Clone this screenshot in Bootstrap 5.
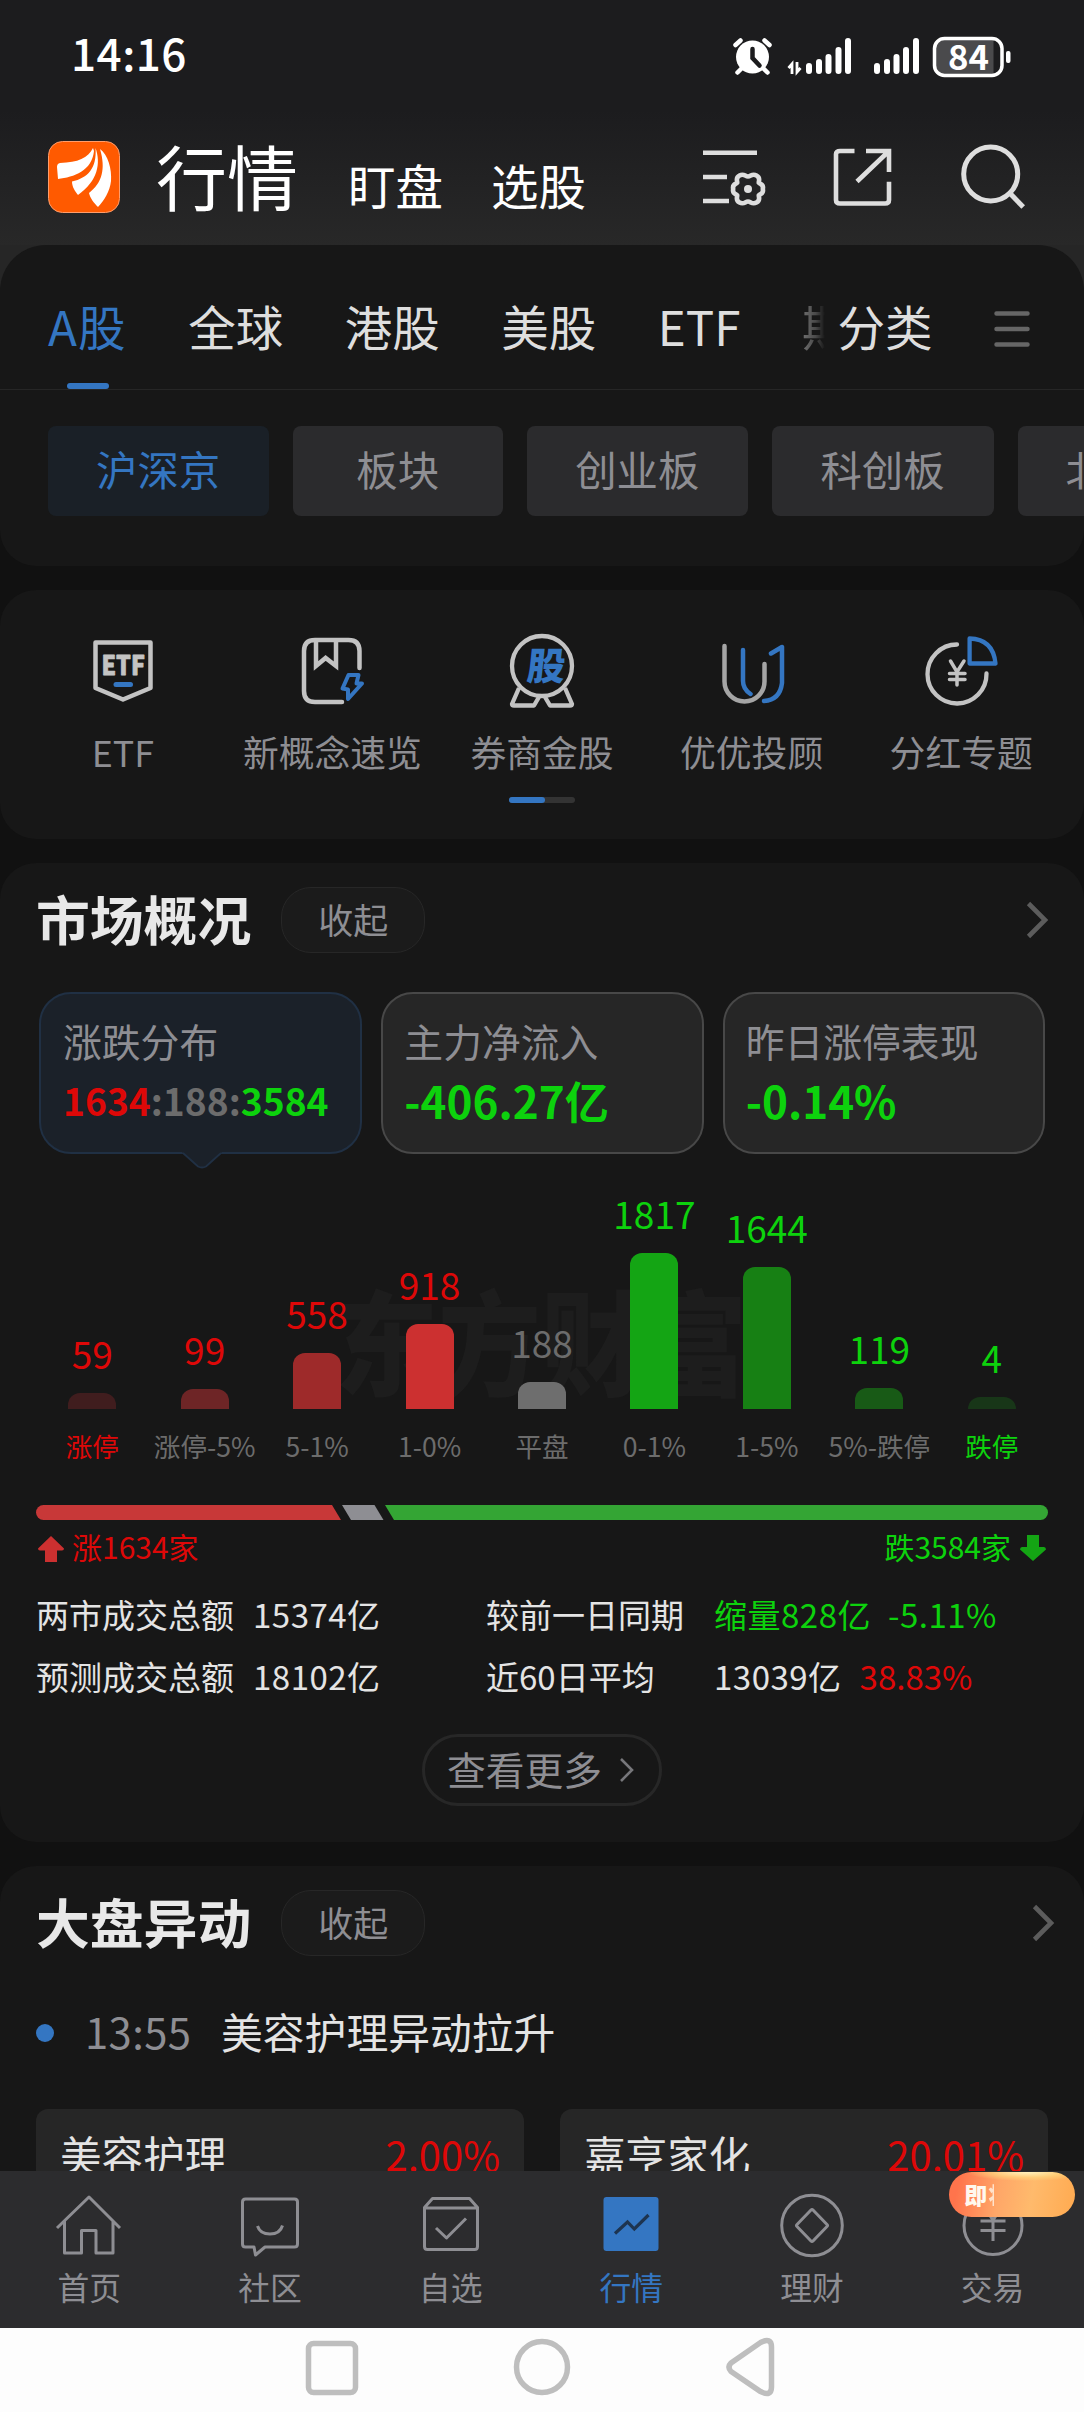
<!DOCTYPE html>
<html lang="zh-CN" data-bs-theme="dark">
<head>
<meta charset="utf-8">
<meta name="viewport" content="width=device-width, initial-scale=1">
<title>行情</title>
<link href="https://cdn.jsdelivr.net/npm/bootstrap@5.3.0/dist/css/bootstrap.min.css" rel="stylesheet">
<style>
  :root { --up:#de0808; --down:#0dd20d; --brand:#3476c2; --muted:#8e8e93; --ink:#e4e4e4; }
  body { width:1084px; height:2412px; margin:0; overflow:hidden; background:#111; color:var(--ink);
    font-family:"Noto Sans CJK SC","Noto Sans",sans-serif; line-height:1; white-space:nowrap; }
  svg { display:block; fill:none; flex:none; overflow:visible; }
  .screen { height:2171px; overflow:hidden; }
  .topbar { height:245px; background:linear-gradient(#1c1c1e 0,#1c1c1e 110px,#282828 245px); color:#fff; }
  .topwrap { background:linear-gradient(#262626 0,#262626 300px,#111 301px); }
  .statusline { height:112px; padding:0 73px 0 71px; }
  .clock { font-size:44px; font-weight:500; padding-top:30px; letter-spacing:.5px; }
  .titles { padding:26px 59px 0 48px; }
  .t-main { font-size:71px; margin-left:36px; }
  .t-sub { font-size:47.5px; }
  .panel { background:#171717; border-radius:36px; }
  .panel-first { border-radius:46px 46px 36px 36px; height:321px; }
  .tabs { height:145px; padding:57px 54px 0 48px; border-bottom:1px solid #262626; font-size:47.5px; gap:61.5px; color:#dedede; }
  .tabs .on { color:var(--brand); letter-spacing:1.2px; }
  .tabs .on::after { content:""; position:absolute; left:19px; top:81px; width:42px; height:6px; border-radius:3px; background:var(--brand); }
  .fade-tab { width:26px; overflow:hidden; -webkit-mask-image:linear-gradient(90deg,rgba(0,0,0,.45),rgba(0,0,0,.25) 60%,transparent); mask-image:linear-gradient(90deg,rgba(0,0,0,.45),rgba(0,0,0,.25) 60%,transparent); }
  .chips { padding:36px 0 0 48px; gap:24px; overflow:hidden; }
  .chip { height:90px; min-width:210px; padding:0 49px 5px 48px; border-radius:8px; background:#2b2b2d; color:var(--muted); font-size:41.4px; flex:none; }
  .chip.on { background:#1a2027; color:var(--brand); }
  .quick { margin-top:24px; height:249px; padding:40px 18px 0; }
  .quick-item { width:20%; font-size:35.8px; color:var(--muted); }
  .quick-item span { margin-top:24px; }
  .pager { width:66px; height:6px; border-radius:3px; background:#333; margin-top:27px; }
  .pager i { display:block; width:36px; height:6px; border-radius:3px; background:var(--brand); }
  .market { margin-top:24px; height:979px; padding:0 36px; }
  .head { height:114px; }
  .head h2 { font-size:53.8px; font-weight:700; line-height:1; margin:0 30px 5px 0; letter-spacing:0; color:#e8e8e8; }
  .fold { width:144px; height:66px; border:1px solid #272727; border-radius:30px; background:#1b1b1b; color:var(--muted); font-size:35px; padding-bottom:3px; }
  .stats { margin:15px 3px 0; gap:19px; }
  .stat { flex:1; height:162px; border:2px solid #484848; border-radius:32px; background:#262626; padding:27px 0 0 21px; }
  .stat.on { background:#1b2129; border-color:#203044; padding-left:22px; }
  .stat .lbl { font-size:38.8px; color:var(--muted); }
  .stat .val { font-size:44px; font-weight:700; margin-top:18px; }
  .stat.on .val { font-size:37.2px; margin-top:22px; color:#6c6c6c; }
  .tip { position:absolute; left:141px; top:158px; }
  .chart { height:255px; margin-top:0; }
  .wmark { position:absolute; left:299px; bottom:14px; font-size:103px; font-weight:900; color:#1d1d1d; line-height:1; transform:scaleY(1.1); transform-origin:bottom; }
  .barcol { width:11.111%; font-size:37px; }
  .barcol b { display:block; width:48px; border-radius:12px 12px 0 0; margin-top:21px; }
  .axis { margin-top:24px; font-size:26.6px; color:#6c6c6c; }
  .axis span { width:11.111%; text-align:center; display:flex; justify-content:center; }
  .up { color:var(--up)!important; } .down { color:var(--down)!important; }
  .strip { margin-top:45px; height:15px; border-radius:7.5px; overflow:hidden; }
  .counts { font-size:30px; margin-top:11px; height:30px; padding:0 2px; }
  .totals { font-size:33px; margin-top:37px; }
  .totals > div { height:62px; align-items:flex-start; }
  .wide { letter-spacing:.5px; }
  .c1 { width:217px; } .c2 { width:233px; } .c3 { width:228px; }
  .more { width:240px; height:72px; border:3px solid #272727; border-radius:36px; font-size:38.8px; color:var(--muted); padding-right:4px; margin-top:12px; gap:18px; }
  .more span { margin-bottom:3px; }
  .moves { margin-top:24px; height:400px; padding:0 36px; }
  .event { margin-top:31px; font-size:41.8px; height:42px; }
  .dot { width:18px; height:18px; border-radius:50%; background:var(--brand); margin-right:31px; margin-top:2px; }
  .pair { margin-top:56px; gap:36px; }
  .tile { flex:1; height:150px; background:#262626; border-radius:12px; padding:25px 24px 0 24px; font-size:41.6px; }
  .tile .num { font-size:40px; }
  .tabbar { height:157px; background:#2c2c2e; color:var(--muted); }
  .tabbar > div { width:16.6667%; padding-top:19px; padding-right:2px; font-size:31.8px; }
  .tabbar span.cap { margin-top:11px; }
  .promo { position:absolute; left:46px; top:1px; width:126px; height:45px; border-radius:23px; padding:11px 0 0 15px; overflow:hidden;
    background:radial-gradient(ellipse 60px 9px at 78px 0,#fff3c0,rgba(255,220,130,.6) 60%,transparent),linear-gradient(100deg,#ff744c 8%,#ffa768 40%,#ffba6c 65%,#ffaa50); color:#fff8ee; font-size:23px; font-weight:900; }
  .promo i { font-style:normal; width:6px; overflow:hidden; margin-left:1px; opacity:.75; }
  .sysnav { height:84px; background:#fdfdfd; }
</style>
</head>
<body class="d-flex flex-column">
<main class="screen flex-shrink-0">
  <div class="topwrap">
  <header class="topbar">
    <div class="statusline d-flex justify-content-between align-items-start">
      <span class="clock">14:16</span>
      <svg width="280" height="112" viewBox="731 0 280 112">
        <g stroke="#fff" stroke-linecap="round"><circle cx="752.500" cy="57" r="16.500" fill="#fff" stroke="none"/><path d="M735.500 45l5-4.500M769.500 45l-5-4.500M742 68l-4.500 4.500M763 68l4.500 4.500" stroke-width="4.500"/><path d="M752.500 49v9l7 7.500" stroke="#1c1c1e" stroke-width="4.500"/>
        <path d="M788.500 68l3.500-4v10M797 62v10l3.500-4" stroke-width="2.800" stroke-linecap="butt"/>
        <path d="M809 66v5M819 62v9M828.500 57v14M838.500 50v21M848 41v30M877 66v5M887 62v9M896.500 57v14M906 50v21M916 41v30" stroke-width="6"/></g>
        <path d="M940 40h53.500v34h-53.500q-5 0-5-5v-24q0-5 5-5z" fill="#4a4a4c"/>
        <rect x="934.500" y="38.500" width="67.500" height="37" rx="10" stroke="#fff" stroke-width="3.500"/>
        <rect x="1006" y="51" width="4.500" height="12" rx="2" fill="#fff"/>
        <text x="948" y="70" fill="#fff" font-size="34" font-weight="700" textLength="41" lengthAdjust="spacingAndGlyphs">84</text>
      </svg>
    </div>
    <div class="titles d-flex align-items-start">
      <svg width="72" height="72" viewBox="0 0 72 72" style="margin-top:3px"><rect x=".5" y=".5" width="71" height="71" rx="14" fill="#ff5a00" stroke="#ff9d6b"/><g fill="#fff"><path d="M45 7C40 17 30 21.500 12 22Q9 22.500 9 26L10 38C26 36 44 30 46 10z"/><path d="M47.500 7C53 22 50 40 30 54C27 50 24 46 24 40.500C40 37 49 27 47.500 7z"/><path d="M52 8C60 14 64 28 63 40C62 50 56 60 50 66C46 62 42 57 41 52C54 42 58 28 52 8z"/></g></svg>
      <div class="d-flex align-items-baseline me-auto" style="margin-top:1px">
        <span class="t-main">行情</span><span class="t-sub" style="margin-left:50px">盯盘</span><span class="t-sub" style="margin-left:48px">选股</span>
      </div>
      <svg width="64" height="62" viewBox="702 146 64 62" style="margin:8px 66px 0 0" stroke="#dedede" stroke-width="4.600"><path d="M703 152.700h54M703 177h24M703 201h26"/><path transform="translate(748 189)" stroke-linejoin="round" d="M10.800 -6.250C12 -5 16 -5 14.800 0C16 5 12 5 10.800 6.250C10.500 8 13 11 8.500 13.500C4 16 3 12.500 0 12.500C-3 12.500-4 16-8.500 13.500C-13 11-10.500 8-10.800 6.250C-12 5-16 5-14.800 0C-16-5-12-5-10.800-6.250C-10.500-8-13-11-8.500-13.500C-4-16-3-12.500 0-12.500C3-12.500 4-16 8.500-13.500C13-11 10.500-8 10.800-6.250z"/><circle cx="748" cy="189" r="4" fill="#dedede" stroke="none"/></svg>
      <svg width="62" height="62" viewBox="0 0 62 62" style="margin:8px 68px 0 0" stroke="#dedede" stroke-width="4.600"><path d="M22.500 5H8Q4 5 4 8V54Q4 57.500 8 57.500H53Q57 57.500 57 54V35.700M34 5H57V26M57 5L25 35.500"/></svg>
      <svg width="63" height="64" viewBox="962 145 63 64" style="margin-top:7px" stroke="#dedede" stroke-width="5"><circle cx="990.700" cy="174" r="27"/><path d="M1009.700 193l13.500 14"/></svg>
    </div>
  </header>
  <section class="panel panel-first">
    <nav class="tabs d-flex">
      <span class="on position-relative">A股</span><span>全球</span><span>港股</span><span>美股</span><span>ETF</span><span class="fade-tab">期货</span>
      <span style="margin-left:-49px">分类</span>
      <svg class="ms-auto" width="36" height="36" style="margin-top:9px" stroke="#666" stroke-width="4.500" stroke-linecap="round"><path d="M2.500 2.500h31M2.500 18h31M2.500 33.500h31"/></svg>
    </nav>
    <div class="chips d-flex">
      <div class="chip on d-flex align-items-center justify-content-center">沪深京</div>
      <div class="chip d-flex align-items-center justify-content-center">板块</div>
      <div class="chip d-flex align-items-center justify-content-center">创业板</div>
      <div class="chip d-flex align-items-center justify-content-center">科创板</div>
      <div class="chip d-flex align-items-center justify-content-center">北交所</div>
    </div>
  </section>
  </div>

  <section class="panel quick d-flex flex-column align-items-center">
    <div class="d-flex w-100">
      <div class="quick-item d-flex flex-column align-items-center">
        <svg width="80" height="80" stroke="#c3c3c3" stroke-width="4.500" stroke-linejoin="round"><path d="M12.500 12.500H67.500V58L40 69.500L12.500 58z"/><text x="18.500" y="45" font-size="26.500" font-weight="900" fill="#c3c3c3" stroke="#c3c3c3" stroke-width=".8" textLength="43.500" lengthAdjust="spacingAndGlyphs">ETF</text><path d="M33 54.500h14.500" stroke="#3476c2" stroke-width="5" stroke-linecap="round"/></svg>
        <span>ETF</span></div>
      <div class="quick-item d-flex flex-column align-items-center">
        <svg width="80" height="80" stroke="#c3c3c3" stroke-width="4.500" stroke-linecap="round"><path d="M67.500 38V21Q67.500 10 56.500 10H23Q12 10 12 21V61Q12 72 23 72H50"/><path d="M24 11V36L33.600 28L44 36V11" stroke-linecap="butt"/><path d="M56.500 45H66.500L64.500 53.500H70L56 69V59.500L50.500 58.500z" stroke="#3476c2" stroke-width="4" stroke-linejoin="round"/></svg>
        <span>新概念速览</span></div>
      <div class="quick-item d-flex flex-column align-items-center">
        <svg width="80" height="80" stroke="#c3c3c3" stroke-width="4.300" stroke-linejoin="round"><circle cx="40" cy="36" r="30"/><path d="M17 58L10 74Q10 75.500 12 75.500H32L37 67M63 58L70 74Q70 75.500 68 75.500H48L43 67"/><text transform="translate(24 50) skewX(-6)" font-size="38" font-weight="900" fill="#3476c2" stroke="none">股</text></svg>
        <span>券商金股</span></div>
      <div class="quick-item d-flex flex-column align-items-center">
        <svg width="80" height="80" stroke-width="4.500" stroke-linecap="round"><path d="M12.500 16V51.500A20 20 0 0 0 52.500 51.500V34" stroke="#a5a5a5"/><path d="M31 20V51Q31 59 38.500 64M59 23.500L70 17V53Q68 70 52 71" stroke="#3476c2" stroke-linejoin="round"/></svg>
        <span>优优投顾</span></div>
      <div class="quick-item d-flex flex-column align-items-center">
        <svg width="80" height="80" stroke="#c3c3c3" stroke-width="4.300" stroke-linecap="round"><path d="M36 14.500A29.500 29.500 0 1 0 65.500 43.500"/><path d="M48.600 8.500Q72 9 74.500 33.500H48.600z" stroke="#3476c2" stroke-linejoin="round"/><path d="M29.500 31L36 42L43 31M36 42V55M28.500 43.500H44M28.500 49.500H44" stroke-width="3.500"/></svg>
        <span>分红专题</span></div>
    </div>
    <div class="pager"><i></i></div>
  </section>

  <section class="panel market">
    <div class="head d-flex align-items-center"><h2>市场概况</h2><div class="fold d-flex align-items-center justify-content-center">收起</div>
      <svg class="ms-auto" width="21" height="36" stroke="#5c5c5c" stroke-width="4.600"><path d="M1.500 1.500L18 18L1.500 34.500"/></svg></div>
    <div class="stats d-flex">
      <div class="stat on position-relative"><div class="lbl">涨跌分布</div><div class="val"><span class="up">1634</span>:188:<span class="down">3584</span>
        <svg class="tip" width="42" height="17"><path d="M0 0L1 1L16 14.500Q20 17 24 14.500L39 1L40 0z" fill="#1b2129"/><path d="M1 1L16 14.500Q20 16.500 24 14.500L39 1" stroke="#203044" stroke-width="1.800"/></svg></div></div>
      <div class="stat"><div class="lbl">主力净流入</div><div class="val down">-406.27亿</div></div>
      <div class="stat"><div class="lbl">昨日涨停表现</div><div class="val down">-0.14%</div></div>
    </div>
    <div class="chart d-flex align-items-end position-relative">
      <div class="wmark">东方财富</div>
      <div class="barcol d-flex flex-column align-items-center position-relative up">59<b style="height:16px;background:#401d1e"></b></div>
      <div class="barcol d-flex flex-column align-items-center position-relative up">99<b style="height:20px;background:#6e2526"></b></div>
      <div class="barcol d-flex flex-column align-items-center position-relative up">558<b style="height:56px;background:#9e2a2a"></b></div>
      <div class="barcol d-flex flex-column align-items-center position-relative up">918<b style="height:85px;background:#cc3030"></b></div>
      <div class="barcol d-flex flex-column align-items-center position-relative" style="color:#6c6c6c">188<b style="height:27px;background:#6e6e6e"></b></div>
      <div class="barcol d-flex flex-column align-items-center position-relative down">1817<b style="height:156px;background:#14a514"></b></div>
      <div class="barcol d-flex flex-column align-items-center position-relative down">1644<b style="height:142px;background:#178014"></b></div>
      <div class="barcol d-flex flex-column align-items-center position-relative down">119<b style="height:21px;background:#185a16"></b></div>
      <div class="barcol d-flex flex-column align-items-center position-relative down">4<b style="height:12px;background:#183618"></b></div>
    </div>
    <div class="axis d-flex"><span class="up">涨停</span><span>涨停-5%</span><span>5-1%</span><span>1-0%</span><span>平盘</span><span>0-1%</span><span>1-5%</span><span>5%-跌停</span><span class="down">跌停</span></div>
    <div class="strip"><svg width="1012" height="15"><path d="M0 0H296L305 15H0z" fill="#c83838"/><path d="M306 0H338.500L347.500 15H315z" fill="#8e8e93"/><path d="M349 0H1012V15H358z" fill="#34a534"/></svg></div>
    <div class="counts d-flex align-items-start justify-content-between">
      <div class="d-flex up"><svg width="26" height="27" style="margin:5px 8px 0 0"><path d="M13 0L26 12.500Q26 14.500 24 14.500H19V26H7V14.500H2Q0 14.500 0 12.500z" fill="#cc3030"/></svg>涨1634家</div>
      <div class="d-flex down">跌3584家<svg width="26" height="27" style="margin:4px 0 0 9px"><path d="M13 26L26 14.500Q26 12 24 12H19V0H7V12H2Q0 12 0 14.500z" fill="#14a514"/></svg></div>
    </div>
    <div class="totals">
      <div class="d-flex"><span class="c1">两市成交总额</span><span class="c2 wide">15374亿</span><span class="c3">较前一日同期</span><span class="down wide">缩量828亿</span><span class="down wide" style="margin-left:17px">-5.11%</span></div>
      <div class="d-flex"><span class="c1">预测成交总额</span><span class="c2 wide">18102亿</span><span class="c3">近60日平均</span><span class="wide">13039亿</span><span class="up" style="margin-left:18px">38.83%</span></div>
    </div>
    <div class="more d-flex align-items-center justify-content-center mx-auto"><span>查看更多</span><svg width="13" height="24" stroke="#77777b" stroke-width="2.600"><path d="M1 1L12 12L1 23"/></svg></div>
  </section>

  <section class="panel moves">
    <div class="head d-flex align-items-center"><h2>大盘异动</h2><div class="fold d-flex align-items-center justify-content-center">收起</div>
      <svg class="ms-auto" width="21" height="36" style="margin-right:-6px" stroke="#5c5c5c" stroke-width="4.600"><path d="M1.500 1.500L18 18L1.500 34.500"/></svg></div>
    <div class="event d-flex align-items-center"><i class="dot"></i><span style="color:#8e8e93;width:136px;letter-spacing:.4px">13:55</span><span>美容护理异动拉升</span></div>
    <div class="pair d-flex">
      <div class="tile d-flex justify-content-between align-items-start"><span>美容护理</span><span class="num up">2.00%</span></div>
      <div class="tile d-flex justify-content-between align-items-start"><span>嘉亨家化</span><span class="num up">20.01%</span></div>
    </div>
  </section>
</main>

<nav class="tabbar d-flex flex-shrink-0">
  <div class="d-flex flex-column align-items-center"><svg width="70" height="70" stroke="#8e8e93" stroke-width="3"><path d="M3 38L35 7L66 38M10.500 31V63H27.500V40.500H42V63H59V31" stroke-linejoin="round"/></svg><span class="cap">首页</span></div>
  <div class="d-flex flex-column align-items-center"><svg width="70" height="70" stroke="#8e8e93" stroke-width="3" stroke-linejoin="round"><path d="M10.500 9H59.500Q62.500 9 62.500 12V54Q62.500 57 59.500 57H30L20.500 65L19 57H10.500Q7.500 57 7.500 54V12Q7.500 9 10.500 9z"/><path d="M22.500 36Q25 44 35 44T47.500 35.500"/></svg><span class="cap">社区</span></div>
  <div class="d-flex flex-column align-items-center"><svg width="70" height="70" stroke="#8e8e93" stroke-width="3" stroke-linejoin="round"><path d="M8.500 17.500L16.500 8.500H53.500L61.500 17.500V56.500Q61.500 59.500 58.500 59.500H11.500Q8.500 59.500 8.500 56.500zM8.500 18H61.500M20 38L30.500 48L50 28.500"/></svg><span class="cap">自选</span></div>
  <div class="d-flex flex-column align-items-center" style="color:var(--brand)"><svg width="70" height="70"><rect x="7.500" y="7" width="55" height="54" rx="3" fill="#3476c2"/><path d="M19 43.500L31.500 32L38.300 39L52.500 25" stroke="#1d3450" stroke-width="3.200"/></svg><span class="cap">行情</span></div>
  <div class="d-flex flex-column align-items-center"><svg width="70" height="70" stroke="#8e8e93" stroke-width="3" stroke-linejoin="round"><circle cx="35" cy="35.500" r="30.300"/><path d="M34 20Q35 19 36 20L50 34.500Q51 35.500 50 36.500L36 51Q35 52 34 51L20 36.500Q19 35.500 20 34.500z"/></svg><span class="cap">理财</span></div>
  <div class="d-flex flex-column align-items-center position-relative"><svg width="70" height="70" stroke="#8e8e93" stroke-width="3"><circle cx="35" cy="35.500" r="29"/><path d="M26 17L35 30L44 17M35 30V51M22.500 31H47.500M22.500 40.500H47.500"/></svg><span class="cap">交易</span>
    <div class="promo d-flex align-items-start">即<i>将</i></div></div>
</nav>
<footer class="sysnav flex-shrink-0 d-flex justify-content-center">
  <svg width="480" height="84" viewBox="302 0 480 84" stroke="#bebebe" stroke-width="5.500"><rect x="308.500" y="15.500" width="47" height="49" rx="5"/><ellipse cx="542" cy="39" rx="25.500" ry="25.500"/><path d="M731 35L760.500 14.500Q771.500 9 771.500 19V59Q771.500 69 760.500 63.500L731 43.500Q727 39 731 35z"/></svg>
</footer>
<script src="https://cdn.jsdelivr.net/npm/bootstrap@5.3.0/dist/js/bootstrap.bundle.min.js"></script>
</body>
</html>
